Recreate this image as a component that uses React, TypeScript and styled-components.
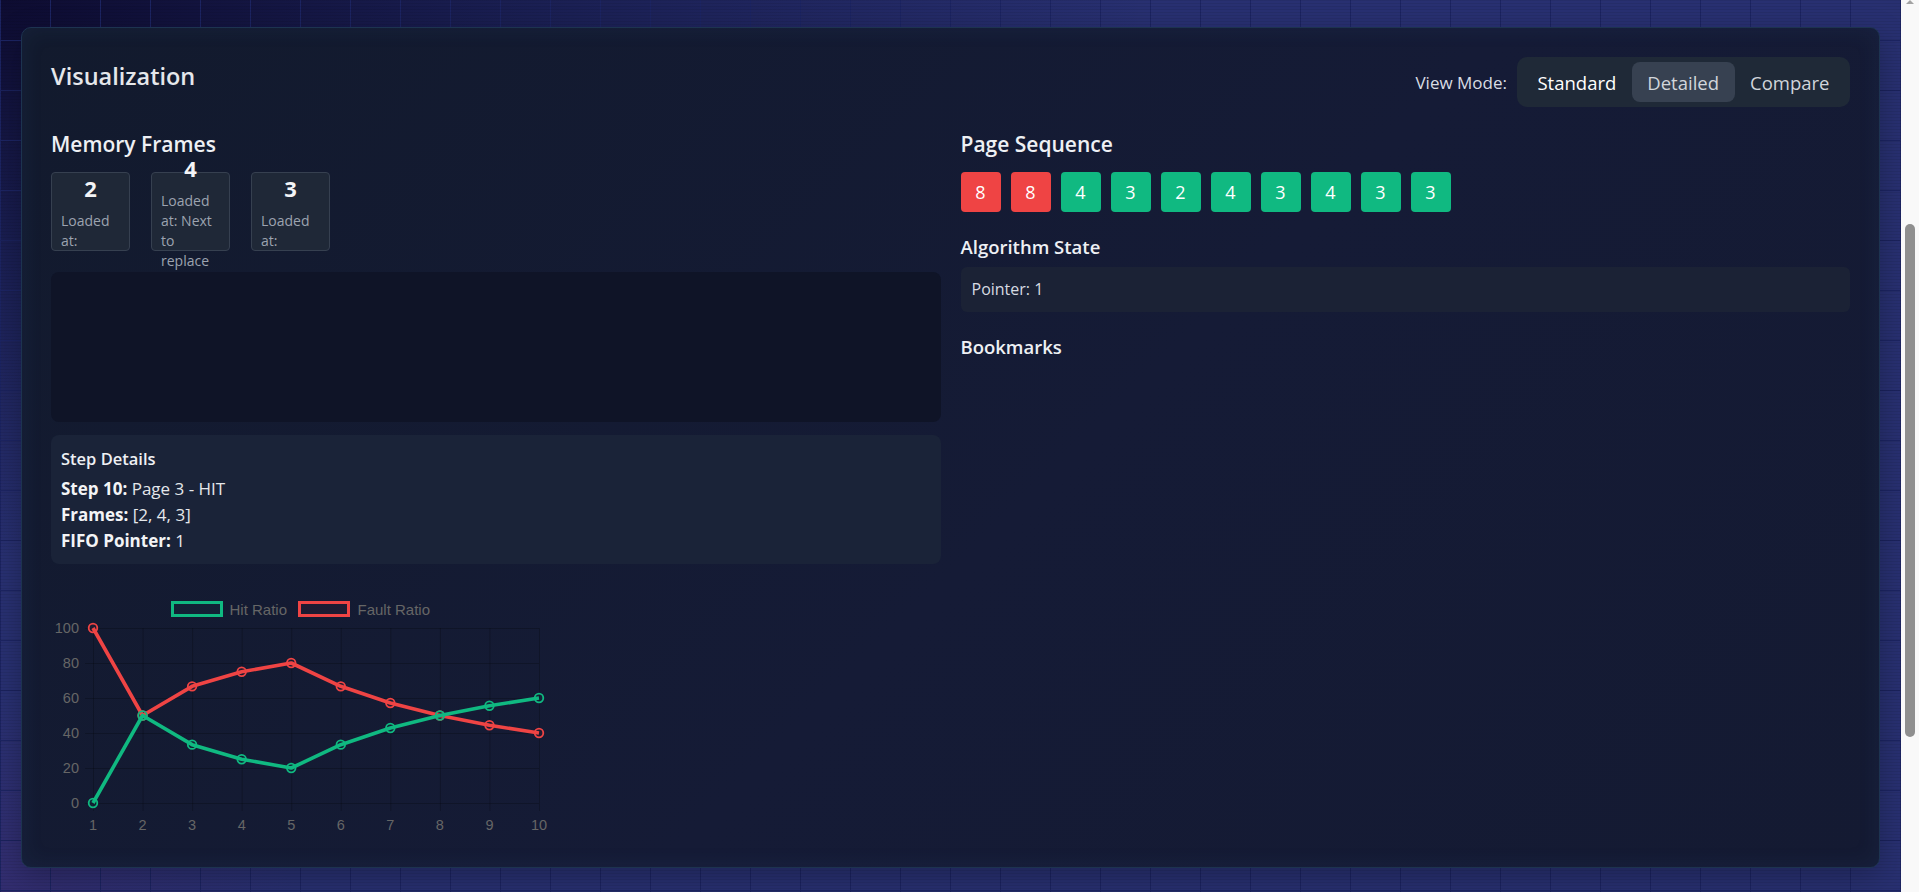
import React from 'react';
import styled, { createGlobalStyle } from 'styled-components';

const GlobalStyle = createGlobalStyle`
  html, body { height: 100%; }
  body {
    margin: 0;
    overflow: hidden;
    font-family: "Segoe UI", "Open Sans", "Noto Sans", sans-serif;
    color: #e5e7eb;
    background-color: #283071;
    background-image:
      repeating-linear-gradient(180deg, rgba(0, 0, 0, 0.07) 0 1px, transparent 1px 3px),
      linear-gradient(90deg, #1c2462 1px, transparent 1px),
      linear-gradient(180deg, #1c2462 1px, transparent 1px),
      radial-gradient(ellipse 1150px 560px at 0 0, rgba(12, 10, 46, 0.95) 0%, rgba(14, 16, 56, 0.55) 45%, rgba(20, 24, 70, 0) 100%),
      radial-gradient(ellipse 300px 200px at 0 100%, rgba(70, 40, 110, 0.35), rgba(70, 40, 110, 0));
    background-size: auto, 50px 50px, 50px 50px, auto, auto;
    background-position: 0 0, 0 0, 0 40px, 0 0, 0 0;
    background-repeat: repeat, repeat, repeat, no-repeat, no-repeat;
    background-attachment: fixed;
  }
`;

/* Window frame: the scrolled page area and the browser's scroll bar beside it. */
const Shell = styled.div`
  display: flex;
  height: 100vh;
`;

const Viewport = styled.main`
  flex: 1;
  min-width: 0;
  overflow: hidden;
  box-sizing: border-box;
  padding: 27px 21px 0;
`;

const ScrollTrack = styled.div`
  flex: none;
  width: 18px;
  background: #f9f9f9;
  display: flex;
  flex-direction: column;
  align-items: center;
`;

const ScrollArrow = styled.div`
  width: 0;
  height: 0;
  border-left: 4px solid transparent;
  border-right: 4px solid transparent;
  border-bottom: 4px solid #a3a3a3;
`;

const ScrollThumb = styled.div`
  width: 10px;
  height: 513px;
  margin-top: 220px;
  border-radius: 5px;
  background: #8f8f8f;
`;

const Card = styled.section`
  border: 1px solid #1d3350;
  border-radius: 10px;
  padding: 29px;
  background: linear-gradient(135deg, #121a2d 0%, #151b36 55%, #141a32 100%);
  box-shadow: inset 0 0 22px rgba(60, 110, 180, 0.1), 0 10px 30px rgba(0, 0, 0, 0.25);
`;

const Header = styled.header`
  display: flex;
  justify-content: space-between;
  align-items: flex-start;
  margin-bottom: 25px;
`;

const Title = styled.h2`
  margin: 5px 0 0;
  font-size: 23.5px;
  font-weight: 600;
  line-height: 1.2;
  color: #e5e7eb;
`;

const ViewMode = styled.div`
  display: flex;
  align-items: center;
  gap: 10px;
  font-size: 17px;
  color: #d9dde3;
`;

const ToggleGroup = styled.div`
  display: flex;
  padding: 5px;
  background: #1f2937;
  border-radius: 10px;
`;

const ToggleButton = styled.button<{ $active?: boolean; $hover?: boolean }>`
  height: 40px;
  padding: 0 15.5px;
  border: 0;
  border-radius: 8px;
  font-family: inherit;
  font-size: 18.5px;
  font-weight: ${(p) => (p.$active ? 500 : 400)};
  color: ${(p) => (p.$active ? '#ffffff' : '#d1d5db')};
  background: ${(p) => (p.$hover ? '#374151' : 'transparent')};
  cursor: pointer;
`;

const Columns = styled.div`
  display: grid;
  grid-template-columns: 1fr 1fr;
  gap: 20px;
  align-items: start;
`;

const LeftColumn = styled.div`
  display: flex;
  flex-direction: column;
`;

const RightColumn = styled.div`
  display: flex;
  flex-direction: column;
  gap: 24.7px;
`;

const SectionTitle = styled.h3`
  margin: 0 0 14.5px;
  font-size: 21px;
  font-weight: 600;
  line-height: 1.2;
  color: #eef0f4;
`;

const SubTitle = styled.h4`
  margin: 0 0 8px;
  font-size: 18.5px;
  font-weight: 600;
  line-height: 1.2;
  color: #eef0f4;
`;

const FramesRow = styled.div`
  display: flex;
  gap: 21px;
  margin-bottom: 21px;
`;

const FrameBox = styled.div`
  box-sizing: border-box;
  width: 79px;
  height: 79px;
  padding: 0 9px;
  border: 1px solid #364050;
  border-radius: 4px;
  background: #1f2837;
  display: flex;
  flex-direction: column;
  align-items: center;
  justify-content: center;
`;

const FrameValue = styled.div`
  font-size: 22px;
  font-weight: 700;
  line-height: 33px;
  margin-bottom: 6px;
  color: #f3f4f6;
`;

const FrameMeta = styled.div`
  align-self: stretch;
  font-size: 14px;
  line-height: 20px;
  color: #9ca3af;
`;

const CanvasArea = styled.div`
  height: 150px;
  margin-bottom: 13px;
  border-radius: 8px;
  background: #0f1427;
`;

const StepDetails = styled.div`
  padding: 12px 10px 10px;
  border-radius: 8px;
  background: #1a2338;
`;

const StepTitle = styled.h4`
  margin: 2px 0 8px;
  font-size: 16.5px;
  font-weight: 600;
  line-height: 1.2;
  color: #eef0f4;
`;

const StepLine = styled.div`
  font-size: 17px;
  line-height: 26px;
  color: #e5e7eb;

  strong {
    font-weight: 700;
    color: #f3f4f6;
  }
`;

const ChartWrap = styled.div`
  margin-top: 20px;
  height: 254px;
`;

const ChartSvg = styled.svg`
  display: block;
  overflow: visible;

  text {
    font-family: "Liberation Sans", Arial, sans-serif;
    fill: #666666;
  }
`;

const PageRow = styled.div`
  display: flex;
  gap: 10px;
`;

const PageChip = styled.div<{ $fault: boolean }>`
  width: 40px;
  height: 40px;
  border-radius: 4px;
  display: grid;
  place-items: center;
  font-size: 18px;
  color: #ffffff;
  background: ${(p) => (p.$fault ? '#ef4444' : '#10b981')};
`;

const StateBox = styled.div`
  padding: 10.5px 11px;
  border-radius: 6px;
  background: #1b2235;
  font-size: 16px;
  line-height: 24px;
  color: #d7dbe2;
`;

const frames = [
  { value: 2, next: false },
  { value: 4, next: true },
  { value: 3, next: false },
];

const sequence: { page: number; fault: boolean }[] = [
  { page: 8, fault: true },
  { page: 8, fault: true },
  { page: 4, fault: false },
  { page: 3, fault: false },
  { page: 2, fault: false },
  { page: 4, fault: false },
  { page: 3, fault: false },
  { page: 4, fault: false },
  { page: 3, fault: false },
  { page: 3, fault: false },
];

const hitRatio = [0, 50, 33.33, 25, 20, 33.33, 42.86, 50, 55.56, 60];
const faultRatio = [100, 50, 66.67, 75, 80, 66.67, 57.14, 50, 44.44, 40];

const GREEN = '#10b981';
const RED = '#ef4444';

const RatioChart: React.FC = () => {
  const px = (i: number) => 42 + (i * 446) / 9;
  const py = (v: number) => 219 - v * 1.75;
  const ticks = [0, 20, 40, 60, 80, 100];
  const grid = 'rgba(0, 0, 0, 0.22)';
  const series = [
    { data: faultRatio, color: RED, fill: 'rgba(239,68,68,0.06)' },
    { data: hitRatio, color: GREEN, fill: 'rgba(16,185,129,0.06)' },
  ];
  return (
    <ChartSvg width={500} height={254} viewBox="0 0 500 254">
      {ticks.map((t) => (
        <line key={`h${t}`} x1={34} x2={488} y1={py(t) + 0.5} y2={py(t) + 0.5} stroke={grid} strokeWidth={1} />
      ))}
      {hitRatio.map((_, i) => (
        <line key={`v${i}`} x1={px(i) + 0.5} x2={px(i) + 0.5} y1={44} y2={227} stroke={grid} strokeWidth={1} />
      ))}
      {ticks.map((t) => (
        <text key={`yl${t}`} x={28} y={py(t) + 5} fontSize={14.5} textAnchor="end">
          {t}
        </text>
      ))}
      {hitRatio.map((_, i) => (
        <text key={`xl${i}`} x={px(i)} y={246} fontSize={14.5} textAnchor="middle">
          {i + 1}
        </text>
      ))}

      <rect x={121.5} y={18.5} width={49} height={13} fill="rgba(16,185,129,0.05)" stroke={GREEN} strokeWidth={3} />
      <text x={178.5} y={30.5} fontSize={15}>Hit Ratio</text>
      <rect x={248.5} y={18.5} width={49} height={13} fill="rgba(239,68,68,0.05)" stroke={RED} strokeWidth={3} />
      <text x={306.5} y={30.5} fontSize={15}>Fault Ratio</text>

      {series.map((s) => (
        <g key={s.color}>
          <polyline
            points={s.data.map((v, i) => `${px(i)},${py(v)}`).join(' ')}
            fill="none"
            stroke={s.color}
            strokeWidth={3.6}
            strokeLinejoin="round"
          />
          {s.data.map((v, i) => (
            <circle key={i} cx={px(i)} cy={py(v)} r={4.3} fill={s.fill} stroke={s.color} strokeWidth={1.8} />
          ))}
        </g>
      ))}
    </ChartSvg>
  );
};

export default function App() {
  return (
    <>
      <GlobalStyle />
      <Shell>
        <Viewport>
          <Card>
            <Header>
              <Title>Visualization</Title>
              <ViewMode>
                <span>View Mode:</span>
                <ToggleGroup>
                  <ToggleButton $active>Standard</ToggleButton>
                  <ToggleButton $hover>Detailed</ToggleButton>
                  <ToggleButton>Compare</ToggleButton>
                </ToggleGroup>
              </ViewMode>
            </Header>

            <Columns>
              <LeftColumn>
                <SectionTitle>Memory Frames</SectionTitle>
                <FramesRow>
                  {frames.map((f, i) => (
                    <FrameBox key={i}>
                      <FrameValue>{f.value}</FrameValue>
                      <FrameMeta>
                        Loaded at: {f.next ? 'Next to replace' : ''}
                      </FrameMeta>
                    </FrameBox>
                  ))}
                </FramesRow>

                <CanvasArea />

                <StepDetails>
                  <StepTitle>Step Details</StepTitle>
                  <StepLine>
                    <strong>Step 10:</strong> Page 3 - HIT
                  </StepLine>
                  <StepLine>
                    <strong>Frames:</strong> [2, 4, 3]
                  </StepLine>
                  <StepLine>
                    <strong>FIFO Pointer:</strong> 1
                  </StepLine>
                </StepDetails>

                <ChartWrap>
                  <RatioChart />
                </ChartWrap>
              </LeftColumn>

              <RightColumn>
                <div>
                  <SectionTitle>Page Sequence</SectionTitle>
                  <PageRow>
                    {sequence.map((s, i) => (
                      <PageChip key={i} $fault={s.fault}>
                        {s.page}
                      </PageChip>
                    ))}
                  </PageRow>
                </div>
                <div>
                  <SubTitle>Algorithm State</SubTitle>
                  <StateBox>Pointer: 1</StateBox>
                </div>
                <div>
                  <SubTitle>Bookmarks</SubTitle>
                </div>
              </RightColumn>
            </Columns>
          </Card>
        </Viewport>
        <ScrollTrack>
          <ScrollArrow />
          <ScrollThumb />
        </ScrollTrack>
      </Shell>
    </>
  );
}
